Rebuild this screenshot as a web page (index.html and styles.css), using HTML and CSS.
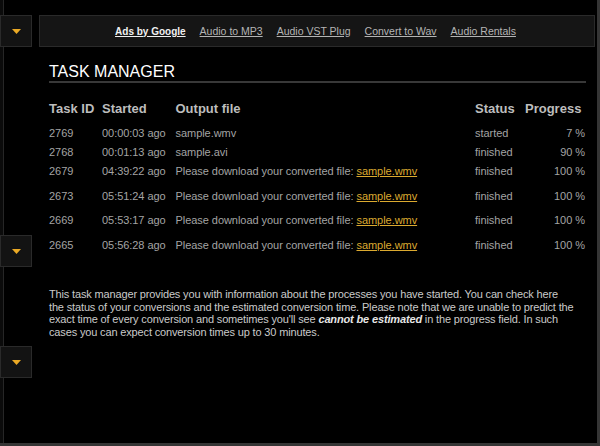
FILE: index.html
```html
<!DOCTYPE html>
<html lang="en">
<head>
<meta charset="utf-8">
<title>Task Manager</title>
<link rel="stylesheet" href="styles.css">
</head>
<body>
<div class="page">
  <aside class="side">
    <div class="btn btn-1"><svg class="tri" width="9" height="5" viewBox="0 0 9 5"><polygon points="0,0 9,0 4.5,5" /></svg></div>
    <div class="btn btn-2"><svg class="tri" width="9" height="5" viewBox="0 0 9 5"><polygon points="0,0 9,0 4.5,5" /></svg></div>
    <div class="btn btn-3"><svg class="tri" width="9" height="5" viewBox="0 0 9 5"><polygon points="0,0 9,0 4.5,5" /></svg></div>
  </aside>
  <main class="main">
    <nav class="adbar">
      <a class="ad ad-google" href="#">Ads by Google</a>
      <a class="ad" href="#">Audio to MP3</a>
      <a class="ad" href="#">Audio VST Plug</a>
      <a class="ad" href="#">Convert to Wav</a>
      <a class="ad" href="#">Audio Rentals</a>
    </nav>
    <h1 class="title">TASK MANAGER</h1>
    <table class="tasks">
      <colgroup>
        <col class="c-id"><col class="c-start"><col class="c-file"><col class="c-status"><col class="c-prog">
      </colgroup>
      <thead>
        <tr><th>Task ID</th><th>Started</th><th>Output file</th><th>Status</th><th>Progress</th></tr>
      </thead>
      <tbody>
        <tr><td>2769</td><td>00:00:03 ago</td><td>sample.wmv</td><td>started</td><td class="num">7 %</td></tr>
        <tr><td>2768</td><td>00:01:13 ago</td><td>sample.avi</td><td>finished</td><td class="num">90 %</td></tr>
        <tr class="dl"><td>2679</td><td>04:39:22 ago</td><td>Please download your converted file: <a class="file" href="#">sample.wmv</a></td><td>finished</td><td class="num">100 %</td></tr>
        <tr class="dl"><td>2673</td><td>05:51:24 ago</td><td>Please download your converted file: <a class="file" href="#">sample.wmv</a></td><td>finished</td><td class="num">100 %</td></tr>
        <tr class="dl"><td>2669</td><td>05:53:17 ago</td><td>Please download your converted file: <a class="file" href="#">sample.wmv</a></td><td>finished</td><td class="num">100 %</td></tr>
        <tr class="dl"><td>2665</td><td>05:56:28 ago</td><td>Please download your converted file: <a class="file" href="#">sample.wmv</a></td><td>finished</td><td class="num">100 %</td></tr>
      </tbody>
    </table>
    <p class="note">This task manager provides you with information about the processes you have started. You can check here<br>the status of your conversions and the estimated conversion time. Please note that we are unable to predict the<br>exact time of every conversion and sometimes you'll see <b><i>cannot be estimated</i></b> in the progress field. In such<br>cases you can expect conversion times up to 30 minutes.</p>
  </main>
</div>
</body>
</html>
```

FILE: styles.css
```css
* { box-sizing: border-box; }
html, body { margin: 0; padding: 0; background: #000; }
body { font-family: "Liberation Sans", Arial, sans-serif; }

.page {
  width: 600px;
  height: 446px;
  display: flex;
  background: linear-gradient(to right, #0b0b0b 0, #0b0b0b 3px, #262626 3px, #262626 4px, #000 4px);
  border-right: 3px solid #353535;
  border-bottom: 3px solid #353535;
  overflow: hidden;
}

.side {
  width: 39px;
  flex: none;
  display: flex;
  flex-direction: column;
}
.btn {
  width: 32px;
  height: 32px;
  border: 1px solid #2a2a2a;
  background: #131313;
  display: flex;
  align-items: center;
  justify-content: center;
}
.btn-1 { margin-top: 15px; }
.btn-2 { margin-top: 188px; }
.btn-3 { margin-top: 79px; }
.tri { display: block; }
.tri polygon { fill: #eaa925; }

.main {
  flex: 1;
  padding-top: 15px;
  min-width: 0;
}

.adbar {
  height: 32px;
  margin-right: 2px;
  border: 1px solid #2a2a2a;
  background: #151515;
  display: flex;
  align-items: center;
  justify-content: center;
  gap: 14px;
  padding-right: 3px;
}
.ad {
  color: #b4b4b4;
  font-size: 10.5px;
  text-decoration: underline;
  line-height: 13px;
}
.ad-google {
  color: #f0f0f0;
  font-weight: bold;
  font-size: 10px;
}

.title {
  margin: 16px 11px 0 10px;
  font-size: 16px;
  line-height: 18px;
  font-weight: normal;
  color: #fff;
  border-bottom: 2px solid #383838;
}

.tasks {
  margin: 18px 11px 0 10px;
  width: 537px;
  table-layout: fixed;
  border-collapse: collapse;
  border-spacing: 0;
}
.c-id { width: 53px; }
.c-start { width: 73.5px; }
.c-file { width: 299.5px; }
.c-status { width: 50px; }
.c-prog { width: 61px; }

.tasks th {
  text-align: left;
  font-size: 13px;
  line-height: 15px;
  font-weight: bold;
  color: #bdbdbd;
  padding: 0 0 8px 0;
  white-space: nowrap;
}
.tasks td {
  font-size: 11px;
  line-height: 13px;
  color: #a4a4a4;
  padding: 3px 0 3px 0;
  vertical-align: top;
  white-space: nowrap;
  letter-spacing: -0.05px;
}
.tasks tr.dl td { padding-bottom: 8.7px; }
.tasks td.num { text-align: right; padding-right: 1px; }
.file { color: #dcaa30; text-decoration: underline; }

.note {
  margin: 27.3px 0 0 10px;
  font-size: 11px;
  line-height: 12.5px;
  color: #cacaca;
  letter-spacing: -0.15px;
  white-space: nowrap;
}
.note b { color: #e6e6e6; }
```
